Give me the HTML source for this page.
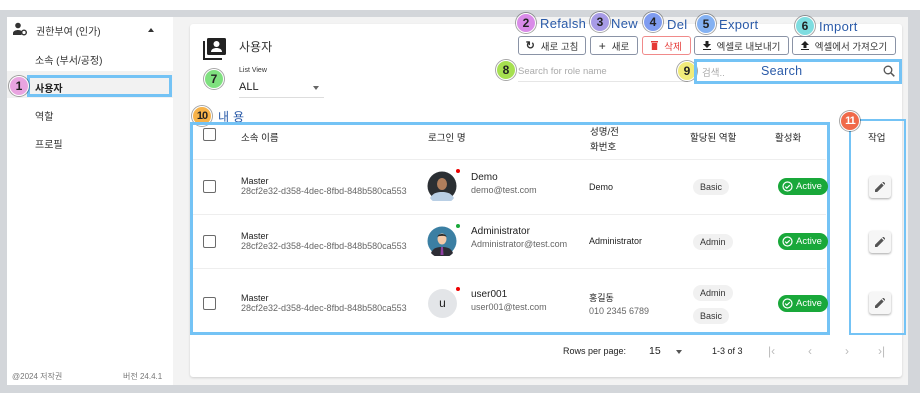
<!DOCTYPE html>
<html><head><meta charset="utf-8"><style>
*{box-sizing:border-box;margin:0;padding:0}
body{width:920px;height:400px;background:#fff;position:relative;overflow:hidden;font-family:"Liberation Sans","Noto Sans CJK KR",sans-serif;color:#222}
.a{position:absolute}
.t{position:absolute;white-space:nowrap}
.circ{position:absolute;width:20px;height:20px;border-radius:50%;border:1.5px solid #fff;box-shadow:0 0 0 1px rgba(0,0,0,.35);font-size:12px;font-weight:bold;color:#222;text-align:center;line-height:18px;font-family:"Liberation Sans Narrow","Liberation Sans",sans-serif}
.lbl{position:absolute;font-size:13px;color:#2a5aa8;letter-spacing:.3px;white-space:nowrap}
.btn{position:absolute;top:36px;height:19px;border:1px solid #8a93a6;border-radius:3px;font-size:9.5px;color:#333;display:flex;align-items:center;justify-content:center;gap:6px;background:#fff}
.blue{position:absolute;border:3px solid #74c3f5}
.cb{position:absolute;width:13px;height:13px;border:1.5px solid #6b6b6b;border-radius:2px;left:203px}
.row{position:absolute;left:193px;width:633px;border-top:1px solid #eee}
.sm{font-size:9px;color:#666}
.chip{position:absolute;background:#f1f1f1;border-radius:8px;font-size:9px;color:#333;padding:3px 7px}
.act{position:absolute;left:778px;width:50px;height:17px;background:#19a83a;border-radius:9px;color:#fff;font-size:9.5px;display:flex;align-items:center;gap:3px;padding-left:4px}
.edit{position:absolute;left:869px;width:22px;height:22px;background:#f6f6f6;border-radius:3px;box-shadow:0 1px 2px rgba(0,0,0,.35);display:flex;align-items:center;justify-content:center}
</style></head><body>
<div class="a" style="left:0;top:10px;width:920px;height:383px;background:#d3d6da"></div>
<div class="a" style="left:7px;top:17px;width:166px;height:368px;background:#fff"></div>
<div class="a" style="left:173px;top:17px;width:735px;height:368px;background:#f3f3f3"></div>
<svg class="a" style="left:12px;top:22px" width="16" height="14" viewBox="0 0 16 14"><circle cx="6" cy="3.5" r="2.8" fill="#333"/><path d="M1 13v-2c0-2 3-3 5-3s3 .5 3.5 1v4z" fill="#333"/><circle cx="12" cy="10.5" r="2.3" fill="none" stroke="#333" stroke-width="1.4"/></svg>
<div class="t" style="left:36px;top:23px;font-size:10px;color:#333">권한부여 (인가)</div>
<div class="a" style="left:148px;top:28px;width:0;height:0;border-left:3.5px solid transparent;border-right:3.5px solid transparent;border-bottom:4px solid #333"></div>
<div class="t" style="left:35px;top:52px;font-size:10px;color:#333">소속 (부서/공정)</div>
<div class="a" style="left:7px;top:71px;width:166px;height:27px;background:#f2f2f2"></div>
<div class="blue" style="left:27px;top:75px;width:145px;height:22px"></div>
<div class="t" style="left:35px;top:80px;font-size:10px;font-weight:bold;color:#222">사용자</div>
<div class="circ" style="left:9px;top:76px;background:#e9a4e0">1</div>
<div class="t" style="left:35px;top:108px;font-size:10px;color:#333">역할</div>
<div class="t" style="left:35px;top:136px;font-size:10px;color:#333">프로필</div>
<div class="t" style="left:12px;top:371px;font-size:8px;color:#777">@2024 저작권</div>
<div class="t" style="left:123px;top:371px;font-size:8px;color:#777">버전 24.4.1</div>
<div class="a" style="left:190px;top:24px;width:712px;height:353px;background:#fff;border-radius:3px;box-shadow:0 1px 2px rgba(0,0,0,.15)"></div>
<svg class="a" style="left:203px;top:38px" width="23" height="22" viewBox="0 0 23 22"><rect x="4" y="0" width="19" height="17" rx="1.5" fill="#222"/><circle cx="13.5" cy="6" r="3" fill="#fff"/><path d="M8 14c0-3 3-4 5.5-4s5.5 1 5.5 4z" fill="#fff"/><path d="M1 3v18h18" fill="none" stroke="#222" stroke-width="2"/></svg>
<div class="t" style="left:239px;top:38px;font-size:12px;color:#333">사용자</div>
<div class="circ" style="left:204px;top:69px;background:#7fe07f">7</div>
<div class="t" style="left:239px;top:67px;font-size:7px;color:#333">List View</div>
<div class="t" style="left:239px;top:81px;font-size:11px;color:#222">ALL</div>
<div class="a" style="left:313px;top:86px;border-left:3.5px solid transparent;border-right:3.5px solid transparent;border-top:4px solid #666"></div>
<div class="a" style="left:239px;top:97px;width:85px;height:1px;background:#ddd"></div>
<div class="circ" style="left:516px;top:13px;background:#d98be8">2</div><div class="lbl" style="left:540px;top:16px">Refalsh</div>
<div class="circ" style="left:590px;top:12px;background:#a79be6">3</div><div class="lbl" style="left:611px;top:16px">New</div>
<div class="circ" style="left:643px;top:12px;background:#7f9cf0">4</div><div class="lbl" style="left:667px;top:17px">Del</div>
<div class="circ" style="left:696px;top:14px;background:#84b1f2">5</div><div class="lbl" style="left:719px;top:17px">Export</div>
<div class="circ" style="left:795px;top:16px;background:#7fdde0">6</div><div class="lbl" style="left:819px;top:19px">Import</div>
<div class="btn" style="left:518px;width:68px"><span style="font-size:11px;font-weight:bold">↻</span>새로 고침</div>
<div class="btn" style="left:590px;width:48px"><span style="font-size:12px">+</span>새로</div>
<div class="btn" style="left:642px;width:49px;border-color:#f08a8a;color:#e53935"><svg width="7" height="9" viewBox="0 0 7 9"><rect x="0" y="0" width="7" height="1.5" fill="#e53935"/><rect x="0.8" y="2" width="5.4" height="7" fill="#e53935"/></svg>삭제</div>
<div class="btn" style="left:694px;width:95px"><svg width="8" height="9" viewBox="0 0 8 9"><path d="M2.5 0h3v3h2.5l-4 4-4-4h2.5z M0 8h8v1H0z" fill="#222"/></svg>엑셀로 내보내기</div>
<div class="btn" style="left:792px;width:104px"><svg width="8" height="9" viewBox="0 0 8 9"><path d="M2.5 7h3v-3h2.5l-4-4-4 4h2.5z M0 8h8v1H0z" fill="#222"/></svg>엑셀에서 가져오기</div>
<div class="circ" style="left:496px;top:60px;background:#a6e050">8</div>
<div class="t" style="left:518px;top:66px;font-size:9.5px;color:#aaa">Search for role name</div>
<div class="a" style="left:518px;top:81px;width:170px;height:1px;background:#e6e6e6"></div>
<div class="circ" style="left:677px;top:61px;background:#f2ec7a">9</div>
<div class="blue" style="left:694px;top:59px;width:208px;height:25px"></div>
<div class="t" style="left:702px;top:65px;font-size:9.5px;color:#aaa">검색..</div>
<div class="lbl" style="left:761px;top:64px;font-size:12.5px">Search</div>
<svg class="a" style="left:883px;top:65px" width="12" height="12" viewBox="0 0 12 12"><circle cx="5" cy="5" r="3.8" fill="none" stroke="#555" stroke-width="1.3"/><path d="M8 8l3.3 3.3" stroke="#555" stroke-width="1.5"/></svg>
<div class="circ" style="left:192px;top:106px;background:#f7b34a;font-size:11px;letter-spacing:-1px">10</div>
<div class="lbl" style="left:218px;top:108px;font-size:12px">내 용</div>
<div class="blue" style="left:190px;top:122px;width:640px;height:213px"></div>
<div class="blue" style="left:849px;top:119px;width:57px;height:216px;border-width:2.5px"></div>
<div class="circ" style="left:840px;top:111px;background:#f06a4a;color:#fff;font-size:11px;letter-spacing:-1px">11</div>
<div class="cb" style="top:128px"></div>
<div class="t" style="left:241px;top:130px;font-size:9.5px">소속 이름</div>
<div class="t" style="left:428px;top:130px;font-size:9.5px">로그인 명</div>
<div class="t" style="left:590px;top:125px;font-size:9.5px;line-height:15px">성명/전<br>화번호</div>
<div class="t" style="left:690px;top:130px;font-size:9.5px">할당된 역할</div>
<div class="t" style="left:775px;top:130px;font-size:9.5px">활성화</div>
<div class="t" style="left:868px;top:130px;font-size:9.5px">작업</div>
<div class="row" style="top:159px"></div><div class="row" style="top:214px"></div><div class="row" style="top:268px"></div>
<div class="cb" style="top:180px"></div>
<div class="t" style="left:241px;top:176px;font-size:9px">Master<br><span class="sm">28cf2e32-d358-4dec-8fbd-848b580ca553</span></div>
<svg class="a" style="left:427px;top:171px" width="30" height="30" viewBox="0 0 30 30"><circle cx="15" cy="15" r="14.5" fill="#2b2f33"/><path d="M3 27c3-5 7-6 12-6s9 1 12 6a14.5 14.5 0 0 1-24 0z" fill="#b9cfe5"/><ellipse cx="15" cy="13" rx="5" ry="6" fill="#b07e5c"/></svg>
<div class="a" style="left:456px;top:169px;width:4px;height:4px;border-radius:50%;background:#e00"></div>
<div class="t" style="left:471px;top:172px;font-size:10px">Demo<br><span class="sm" style="font-size:9px;line-height:14px">demo@test.com</span></div>
<div class="t" style="left:589px;top:182px;font-size:9px">Demo</div>
<div class="chip" style="left:693px;top:179px">Basic</div>
<div class="act" style="top:178px"><svg width="11" height="11" viewBox="0 0 11 11"><circle cx="5.5" cy="5.5" r="4.5" fill="none" stroke="#fff" stroke-width="1.2"/><path d="M3.2 5.6l1.6 1.6 3-3" fill="none" stroke="#fff" stroke-width="1.2"/></svg>Active</div>
<div class="edit" style="top:176px"><svg width="10" height="10" viewBox="0 0 10 10"><path d="M0 10v-2.2l6.5-6.5 2.2 2.2-6.5 6.5zM7.3.5l1-1 2.2 2.2-1 1z" fill="#555"/></svg></div>
<div class="cb" style="top:235px"></div>
<div class="t" style="left:241px;top:231px;font-size:9px">Master<br><span class="sm">28cf2e32-d358-4dec-8fbd-848b580ca553</span></div>
<svg class="a" style="left:427px;top:226px" width="30" height="30" viewBox="0 0 30 30"><circle cx="15" cy="15" r="14.5" fill="#3b7fa3"/><path d="M4 27c2-5 6-6 11-6s9 1 11 6a14.5 14.5 0 0 1-22 0z" fill="#2d2d35"/><path d="M14 21h2l.5 8h-3z" fill="#8d3ea0"/><ellipse cx="15" cy="13" rx="4.5" ry="5.5" fill="#f2c9a8"/><path d="M10.5 11c0-4 9-4 9 0-1-1.5-8-1.5-9 0z" fill="#2d2d2d"/></svg>
<div class="a" style="left:456px;top:224px;width:4px;height:4px;border-radius:50%;background:#19a83a"></div>
<div class="t" style="left:471px;top:226px;font-size:10px">Administrator<br><span class="sm" style="font-size:9px;line-height:14px">Administrator@test.com</span></div>
<div class="t" style="left:589px;top:236px;font-size:9px">Administrator</div>
<div class="chip" style="left:693px;top:234px">Admin</div>
<div class="act" style="top:233px"><svg width="11" height="11" viewBox="0 0 11 11"><circle cx="5.5" cy="5.5" r="4.5" fill="none" stroke="#fff" stroke-width="1.2"/><path d="M3.2 5.6l1.6 1.6 3-3" fill="none" stroke="#fff" stroke-width="1.2"/></svg>Active</div>
<div class="edit" style="top:231px"><svg width="10" height="10" viewBox="0 0 10 10"><path d="M0 10v-2.2l6.5-6.5 2.2 2.2-6.5 6.5zM7.3.5l1-1 2.2 2.2-1 1z" fill="#555"/></svg></div>
<div class="cb" style="top:297px"></div>
<div class="t" style="left:241px;top:293px;font-size:9px">Master<br><span class="sm">28cf2e32-d358-4dec-8fbd-848b580ca553</span></div>
<div class="a" style="left:428px;top:289px;width:29px;height:29px;border-radius:50%;background:#e3e5e8;font-size:12px;text-align:center;line-height:29px">u</div>
<div class="a" style="left:456px;top:287px;width:4px;height:4px;border-radius:50%;background:#e00"></div>
<div class="t" style="left:471px;top:289px;font-size:10px">user001<br><span class="sm" style="font-size:9px;line-height:14px">user001@test.com</span></div>
<div class="t" style="left:589px;top:291px;font-size:9px">홍길동<br><span class="sm" style="line-height:14px">010 2345 6789</span></div>
<div class="chip" style="left:693px;top:285px">Admin</div>
<div class="chip" style="left:693px;top:308px">Basic</div>
<div class="act" style="top:295px"><svg width="11" height="11" viewBox="0 0 11 11"><circle cx="5.5" cy="5.5" r="4.5" fill="none" stroke="#fff" stroke-width="1.2"/><path d="M3.2 5.6l1.6 1.6 3-3" fill="none" stroke="#fff" stroke-width="1.2"/></svg>Active</div>
<div class="edit" style="top:292px"><svg width="10" height="10" viewBox="0 0 10 10"><path d="M0 10v-2.2l6.5-6.5 2.2 2.2-6.5 6.5zM7.3.5l1-1 2.2 2.2-1 1z" fill="#555"/></svg></div>
<div class="t" style="left:563px;top:346px;font-size:9px">Rows per page:</div>
<div class="t" style="left:649px;top:345px;font-size:10.5px">15</div>
<div class="a" style="left:676px;top:350px;border-left:3.5px solid transparent;border-right:3.5px solid transparent;border-top:4px solid #555"></div>
<div class="t" style="left:712px;top:346px;font-size:9px">1-3 of 3</div>
<div class="t" style="left:768px;top:344px;font-size:12px;color:#bbb">|‹</div>
<div class="t" style="left:808px;top:344px;font-size:12px;color:#bbb">‹</div>
<div class="t" style="left:845px;top:344px;font-size:12px;color:#bbb">›</div>
<div class="t" style="left:878px;top:344px;font-size:12px;color:#bbb">›|</div>
</body></html>
